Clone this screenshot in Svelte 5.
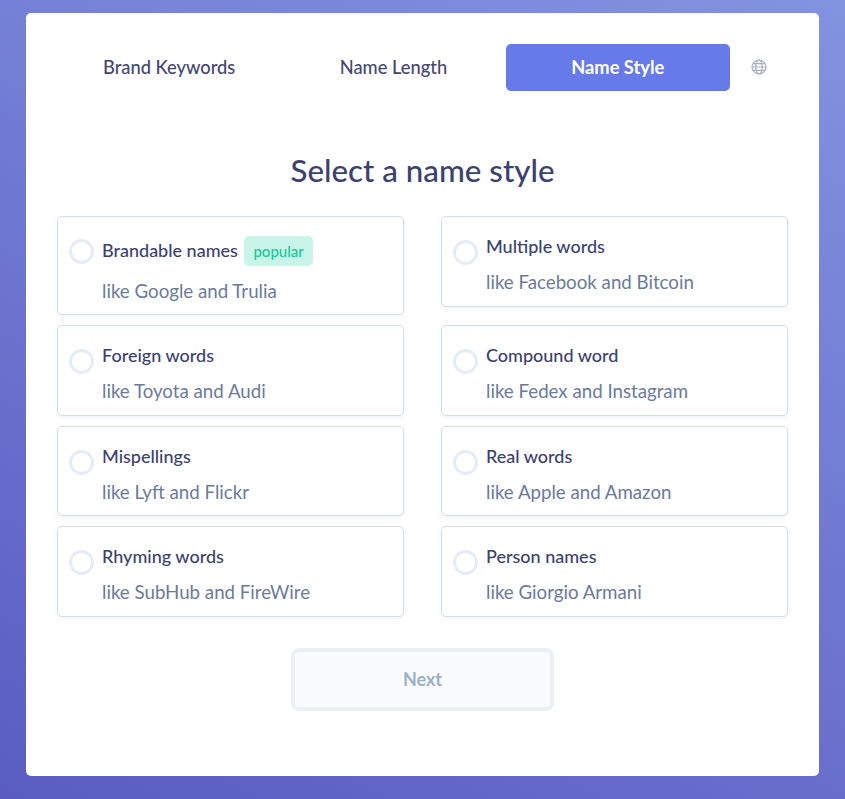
<script>
  const left = [
    { name: 'Brandable names', hint: 'like Google and Trulia', popular: true },
    { name: 'Foreign words', hint: 'like Toyota and Audi' },
    { name: 'Mispellings', hint: 'like Lyft and Flickr' },
    { name: 'Rhyming words', hint: 'like SubHub and FireWire' }
  ];
  const right = [
    { name: 'Multiple words', hint: 'like Facebook and Bitcoin' },
    { name: 'Compound word', hint: 'like Fedex and Instagram' },
    { name: 'Real words', hint: 'like Apple and Amazon' },
    { name: 'Person names', hint: 'like Giorgio Armani' }
  ];
  const options = left.flatMap((item, i) => [item, right[i]]);
</script>

<div class="page">
  <main class="card">
    <nav class="tabs">
      <div class="tab">Brand Keywords</div>
      <div class="tab">Name Length</div>
      <div class="tab active">Name Style</div>
      <div class="globe">
        <svg width="16" height="16" viewBox="0 0 16 16" fill="none" stroke="#a9aec9" stroke-width="1.2">
          <circle cx="8" cy="8" r="7" />
          <ellipse cx="8" cy="8" rx="3.2" ry="7" />
          <path d="M1 8h14M2 4.6h12M2 11.4h12" />
        </svg>
      </div>
    </nav>

    <h1>Select a name style</h1>

    <section class="grid">
      {#each options as o}
        <div class="option">
          <span class="radio" class:first={o.popular}></span>
          <div class="body">
            <div class="name" class:pop={o.popular}>
              {o.name}
              {#if o.popular}<span class="badge">popular</span>{/if}
            </div>
            <div class="hint">{o.hint}</div>
          </div>
        </div>
      {/each}
    </section>

    <div class="actions">
      <button class="next" disabled>Next</button>
    </div>
  </main>
</div>

<style>
  :global(body) {
    margin: 0;
  }
  .page {
    box-sizing: border-box;
    width: 845px;
    height: 799px;
    padding: 13px 26px 23px;
    background: linear-gradient(205deg, #8293e0 0%, #5a5cc2 100%);
    font-family: Lato, "Open Sans", sans-serif;
    color: #3b3f70;
  }
  .card {
    box-sizing: border-box;
    height: 763px;
    background: #fff;
    border-radius: 5px;
    padding: 31px 31px 0;
  }
  .tabs {
    display: grid;
    grid-template-columns: repeat(3, 224.3px) 1fr;
    height: 47px;
  }
  .tab {
    display: flex;
    align-items: center;
    justify-content: center;
    padding-bottom: 2px;
    box-sizing: border-box;
    border-radius: 5px;
    font-size: 18.3px;
    font-weight: 500;
    color: #44466f;
  }
  .tab.active {
    background: #667be9;
    color: #fff;
    font-weight: 700;
  }
  .globe {
    display: flex;
    align-items: center;
    justify-content: center;
    padding-bottom: 1px;
  }
  h1 {
    margin: 62px 0 0;
    height: 63px;
    text-align: center;
    font-size: 31.3px;
    line-height: 35px;
    font-weight: 500;
    color: #3b4171;
  }
  .grid {
    display: grid;
    grid-template-columns: 347px 347px;
    justify-content: space-between;
    align-items: start;
    row-gap: 10px;
  }
  .option {
    box-sizing: border-box;
    display: flex;
    min-height: 90.5px;
    padding: 10px 11px 9px 10.5px;
    gap: 8.5px;
    border: 1px solid #d0deee;
    border-radius: 5px;
    background: #fff;
    box-shadow: 0 2px 4px rgba(90, 110, 160, 0.08);
  }
  .radio {
    box-sizing: border-box;
    flex: none;
    width: 25px;
    height: 25px;
    margin-top: 13px;
    border: 3.5px solid #e5ecf8;
    border-radius: 50%;
  }
  .radio.first {
    margin-top: 12px;
  }
  .name {
    box-sizing: border-box;
    display: flex;
    align-items: center;
    gap: 6px;
    height: 38px;
    font-size: 18px;
    font-weight: 500;
    color: #3b3f70;
  }
  .name.pop {
    height: 47px;
    padding-bottom: 2px;
  }
  .badge {
    display: inline-block;
    margin-top: 3px;
    padding: 0 9.5px;
    line-height: 30px;
    background: #c9f5e9;
    color: #14c99a;
    border-radius: 5px;
    font-size: 15px;
  }
  .hint {
    margin-top: 3px;
    font-size: 18.7px;
    line-height: 28px;
    color: #6b7a9b;
  }
  .actions {
    display: flex;
    justify-content: center;
    margin-top: 31px;
  }
  .next {
    box-sizing: border-box;
    width: 263px;
    height: 63px;
    border: 4px solid #eeeff3;
    border-radius: 8px;
    background: #fafbfd;
    color: #9dafc9;
    font: 700 18px Lato, "Open Sans", sans-serif;
  }
</style>
